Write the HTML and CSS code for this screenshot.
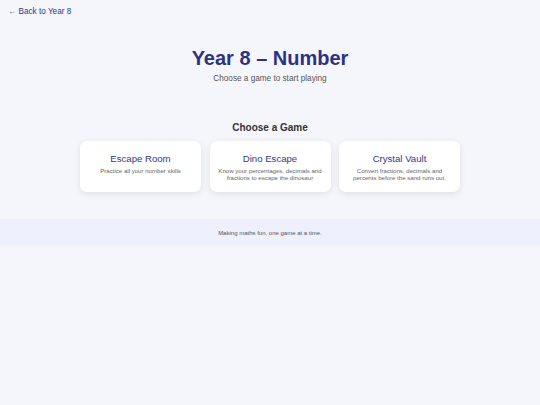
FILE: index.html
```html
<!DOCTYPE html>
<html lang="en">
<head>
<meta charset="utf-8">
<title>Year 8 – Number</title>
<link rel="stylesheet" href="styles.css">
</head>
<body>
<nav class="topnav"><a class="back" href="#">← Back to Year 8</a></nav>
<header class="hero">
  <h1 class="title">Year 8 – Number</h1>
  <p class="subtitle">Choose a game to start playing</p>
</header>
<main class="games">
  <h2 class="games-heading">Choose a Game</h2>
  <div class="grid">
    <a class="card" href="#">
      <span class="card-title">Escape Room</span>
      <span class="card-desc">Practice all your number skills</span>
    </a>
    <a class="card" href="#">
      <span class="card-title">Dino Escape</span>
      <span class="card-desc">Know your percentages, decimals and fractions to escape the dinosaur</span>
    </a>
    <a class="card" href="#">
      <span class="card-title">Crystal Vault</span>
      <span class="card-desc">Convert fractions, decimals and percents before the sand runs out.</span>
    </a>
  </div>
</main>
<footer class="footer">Making maths fun, one game at a time.</footer>
</body>
</html>
```
FILE: styles.css
```css
* { box-sizing: border-box; }
html, body { margin: 0; padding: 0; }
body {
  background: #f5f6fb;
  font-family: "Liberation Sans", Arial, sans-serif;
  color: #333;
  min-height: 405px;
}
.topnav {
  padding: 7px 8px 0;
  height: 20px;
  font-size: 8.2px;
  line-height: 10px;
}
.back {
  color: #34378a;
  text-decoration: none;
}
.hero { text-align: center; padding-top: 26px; }
.title {
  margin: 0;
  font-size: 20px;
  line-height: 24px;
  font-weight: 700;
  color: #2d3182;
}
.subtitle {
  margin: 3px 0 0;
  font-size: 8.2px;
  line-height: 11px;
  color: #555;
}
.games { width: 380px; margin: 0 auto; padding-top: 37px; }
.games-heading {
  margin: 0 0 7px;
  text-align: center;
  font-size: 10px;
  line-height: 13px;
  font-weight: 700;
  color: #333;
}
.grid {
  display: grid;
  grid-template-columns: repeat(3, 1fr);
  gap: 8.5px;
}
.card {
  display: flex;
  flex-direction: column;
  align-items: center;
  text-align: center;
  background: #fff;
  border-radius: 7px;
  box-shadow: 0 2px 6px rgba(30, 35, 80, 0.1);
  padding: 12px 8px 11px;
  text-decoration: none;
}
.card-title {
  font-size: 9.6px;
  line-height: 11px;
  color: #34378a;
}
.card-desc {
  margin-top: 3px;
  font-size: 6.1px;
  line-height: 7px;
  color: #666;
}
.footer {
  margin-top: 27px;
  background: #eef0fd;
  height: 27px;
  display: flex;
  align-items: center;
  justify-content: center;
  font-size: 6px;
  color: #555;
}
```
